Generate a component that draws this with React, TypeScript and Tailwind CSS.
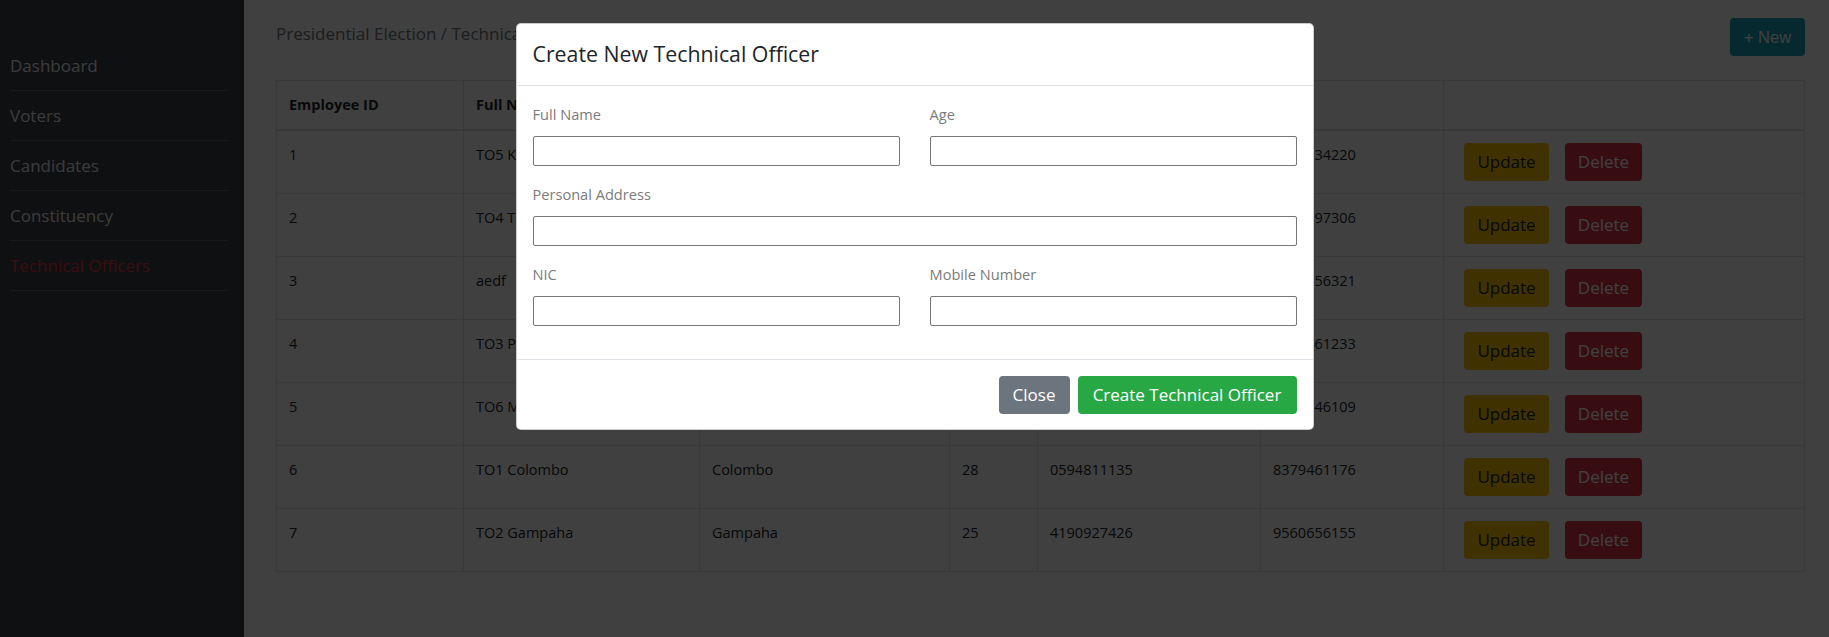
import React from "react";

const rows = [
  ["1", "TO5 Kandy", "Kandy", "31", "9823456712", "5728134220"],
  ["2", "TO4 Trincomalee", "Trincomalee", "27", "7412589630", "6120397306"],
  ["3", "aedf", "asdf", "22", "1234567890", "4810356321"],
  ["4", "TO3 Puttalam", "Puttalam", "29", "3390184725", "2057461233"],
  ["5", "TO6 Matara", "Matara", "33", "8801927364", "7132846109"],
  ["6", "TO1 Colombo", "Colombo", "28", "0594811135", "8379461176"],
  ["7", "TO2 Gampaha", "Gampaha", "25", "4190927426", "9560656155"],
];

const navItems = ["Dashboard", "Voters", "Candidates", "Constituency", "Technical Officers"];

function Field({ label }: { label: string }) {
  return (
    <div className="mb-4">
      <label className="block text-[14.6px] leading-6 text-[#7b7b7b] mb-[10px]">{label}</label>
      <input type="text" className="block w-full h-[30px] border border-[#767676] rounded-[2px] bg-white outline-none" />
    </div>
  );
}

export default function App() {
  return (
    <div className="relative w-[1829px] h-[637px] overflow-hidden font-['Open_Sans',sans-serif]">
      <div className="flex h-full">
        <aside className="w-[244px] shrink-0 h-full bg-[#3d4148] pt-[41px] pl-[10px] pr-[16px]">
          <ul>
            {navItems.map((n, i) => (
              <li
                key={n}
                className={`h-[50px] flex items-center border-b border-[#62666d] text-[17px] ${
                  i === 4 ? "text-[#e63946]" : "text-[#ebebeb]"
                }`}
              >
                {n}
              </li>
            ))}
          </ul>
        </aside>
        <main className="flex-1 bg-white pl-[32px] pr-[25px] pt-[18px]">
          <div className="flex justify-between items-start mb-[24px]">
            <div className="mt-[4px] text-[17px] leading-6 text-[#6c757d]">Presidential Election / Technical Officers</div>
            <button className="w-[75px] h-[38px] rounded-[4px] bg-[#17a2b8] text-white text-[16.5px] font-['Liberation_Sans',sans-serif]">
              + New
            </button>
          </div>
          <table className="w-full table-fixed border-collapse text-[#212529]">
            <colgroup>
              <col className="w-[187px]" />
              <col className="w-[236px]" />
              <col className="w-[250px]" />
              <col className="w-[88px]" />
              <col className="w-[223px]" />
              <col className="w-[183px]" />
              <col className="w-[361px]" />
            </colgroup>
            <thead>
              <tr>
                {["Employee ID", "Full Name", "Personal Address", "Age", "NIC", "Tel", ""].map((h, i) => (
                  <th key={i} className="border border-b-2 border-[#dee2e6] px-3 py-3 text-left align-bottom text-[14.5px] leading-6 font-bold">
                    {h}
                  </th>
                ))}
              </tr>
            </thead>
            <tbody>
              {rows.map((r) => (
                <tr key={r[0]}>
                  {r.map((c, i) => (
                    <td key={i} className="border border-[#dee2e6] px-3 py-3 align-top text-[14.5px] leading-6 whitespace-nowrap overflow-hidden">
                      {c}
                    </td>
                  ))}
                  <td className="border border-[#dee2e6] px-3 py-3 align-top">
                    <div className="flex">
                      <button className="mx-2 w-[85px] h-[38px] rounded-[4px] bg-[#ffc107] text-[#212529] text-[17px]">Update</button>
                      <button className="mx-2 w-[77px] h-[38px] rounded-[4px] bg-[#dc3545] text-white text-[17px]">Delete</button>
                    </div>
                  </td>
                </tr>
              ))}
            </tbody>
          </table>
        </main>
      </div>

      <div className="absolute inset-0 bg-black/75 flex justify-center items-start pt-[23px]">
        <div className="w-[798px] bg-white rounded-[5px] border border-black/20">
          <div className="px-4 pt-4 pb-[17px] border-b border-[#dee2e6]">
            <h5 className="text-[21.3px] leading-[28px] font-normal text-[#212529]">Create New Technical Officer</h5>
          </div>
          <div className="px-4 pt-4 pb-[17px]">
            <div className="grid grid-cols-2 gap-x-[30px]">
              <Field label="Full Name" />
              <Field label="Age" />
            </div>
            <Field label="Personal Address" />
            <div className="grid grid-cols-2 gap-x-[30px]">
              <Field label="NIC" />
              <Field label="Mobile Number" />
            </div>
          </div>
          <div className="border-t border-[#dee2e6] px-4 pt-4 pb-[15px] flex justify-end gap-2">
            <button className="w-[71px] h-[38px] rounded-[4px] bg-[#6c757d] text-white text-[17px]">Close</button>
            <button className="w-[219px] h-[38px] rounded-[4px] bg-[#28a745] text-white text-[17px]">Create Technical Officer</button>
          </div>
        </div>
      </div>
    </div>
  );
}
